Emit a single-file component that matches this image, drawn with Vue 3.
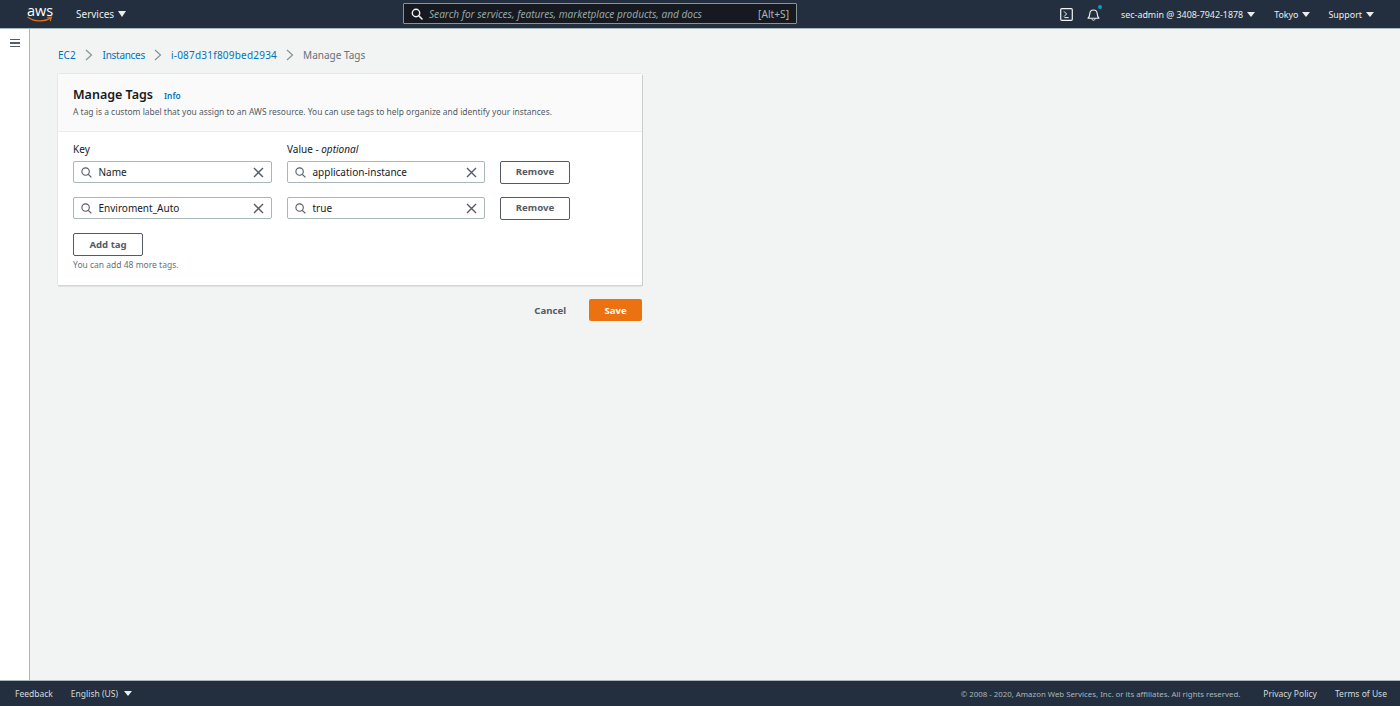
<script setup>
const rows = [
  { key: 'Name', value: 'application-instance' },
  { key: 'Enviroment_Auto', value: 'true' }
]
const crumbs = [
  { text: 'EC2', cls: '' },
  { text: 'Instances', cls: 'tight' },
  { text: 'i-087d31f809bed2934', cls: 'wide' }
]
</script>

<template>
  <div class="app">
    <header class="top">
      <div class="logo">
        <span class="logo-word">aws</span>
        <svg class="smile" width="26" height="7" viewBox="0 0 26 7">
          <path d="M1 1.2C7 5.6 17 6.2 23 2.4" fill="none" stroke="#ec7211" stroke-width="1.3" stroke-linecap="round"/>
          <path d="M20.6 1.2 24.4 1 23.4 4.6" fill="none" stroke="#ec7211" stroke-width="1.1" stroke-linecap="round"/>
        </svg>
      </div>
      <div class="nav-item services">Services<i class="caret big"></i></div>
      <div class="search">
        <svg class="search-ico" width="12" height="12" viewBox="0 0 12 12">
          <circle cx="5" cy="5" r="3.7" fill="none" stroke="#f2f3f3" stroke-width="1.4"/>
          <path d="M7.8 7.8 11 11" stroke="#f2f3f3" stroke-width="1.6" stroke-linecap="round"/>
        </svg>
        <span class="search-text">Search for services, features, marketplace products, and docs</span>
        <span class="search-key">[Alt+S]</span>
      </div>
      <div class="top-right">
        <svg class="term" width="13" height="13" viewBox="0 0 13 13">
          <rect x="0.7" y="0.7" width="11.6" height="11.6" rx="1" fill="none" stroke="#f2f3f3" stroke-width="1.2"/>
          <path d="M4 3.4 6.6 6 4 8.6M4.4 9.6H8.6" fill="none" stroke="#f2f3f3" stroke-width="1"/>
        </svg>
        <div class="bell">
          <svg width="13" height="13" viewBox="0 0 13 13">
            <path d="M1 10.2C2.6 9 2.7 7.6 2.8 5.6 3 3.4 4.4 2 6.5 2s3.5 1.4 3.7 3.6c.1 2 .2 3.4 1.8 4.6Z" fill="none" stroke="#f2f3f3" stroke-width="1.1" stroke-linejoin="round"/>
            <path d="M4.9 10.8c.2 1 .8 1.5 1.6 1.5s1.4-.5 1.6-1.5" fill="none" stroke="#f2f3f3" stroke-width="1"/>
          </svg>
          <span class="dot"></span>
        </div>
        <div class="nav-item small account">sec-admin @ 3408-7942-1878<i class="caret"></i></div>
        <div class="nav-item small region">Tokyo<i class="caret"></i></div>
        <div class="nav-item small support">Support<i class="caret"></i></div>
      </div>
    </header>

    <div class="middle">
      <aside class="side">
        <div class="burger"><span></span><span></span><span></span></div>
      </aside>
      <main class="content">
        <nav class="crumbs">
          <template v-for="c in crumbs" :key="c.text">
            <a class="link" :class="c.cls">{{ c.text }}</a>
            <svg class="chev" width="8" height="12" viewBox="0 0 8 12">
              <path d="M1 1 6.5 6 1 11" fill="none" stroke="#879596" stroke-width="1.2"/>
            </svg>
          </template>
          <span class="crumb-last">Manage Tags</span>
        </nav>

        <section class="card">
          <div class="card-head">
            <div class="title-row">
              <h1 class="title">Manage Tags</h1>
              <a class="info">Info</a>
            </div>
            <p class="desc">A tag is a custom label that you assign to an AWS resource. You can use tags to help organize and identify your instances.</p>
          </div>
          <div class="card-body">
            <div class="labels">
              <label class="lab">Key</label>
              <label class="lab">Value - <em>optional</em></label>
            </div>
            <div v-for="r in rows" :key="r.key" class="row">
              <div class="input key">
                <svg class="in-search" width="11" height="11" viewBox="0 0 11 11">
                  <circle cx="4.6" cy="4.6" r="3.7" fill="none" stroke="#545b64" stroke-width="1.1"/>
                  <path d="M7.3 7.3 10.4 10.4" stroke="#545b64" stroke-width="1.2"/>
                </svg>
                <span class="in-text">{{ r.key }}</span>
                <svg class="in-x" width="11" height="11" viewBox="0 0 11 11">
                  <path d="M1 1 10 10M10 1 1 10" stroke="#545b64" stroke-width="1.4"/>
                </svg>
              </div>
              <div class="input val">
                <svg class="in-search" width="11" height="11" viewBox="0 0 11 11">
                  <circle cx="4.6" cy="4.6" r="3.7" fill="none" stroke="#545b64" stroke-width="1.1"/>
                  <path d="M7.3 7.3 10.4 10.4" stroke="#545b64" stroke-width="1.2"/>
                </svg>
                <span class="in-text">{{ r.value }}</span>
                <svg class="in-x" width="11" height="11" viewBox="0 0 11 11">
                  <path d="M1 1 10 10M10 1 1 10" stroke="#545b64" stroke-width="1.4"/>
                </svg>
              </div>
              <button class="btn remove">Remove</button>
            </div>
            <button class="btn add">Add tag</button>
            <p class="hint">You can add 48 more tags.</p>
          </div>
        </section>

        <div class="actions">
          <button class="cancel">Cancel</button>
          <button class="save">Save</button>
        </div>
      </main>
    </div>

    <footer class="foot">
      <span class="f-link">Feedback</span>
      <span class="f-lang">English (US)<i class="caret"></i></span>
      <span class="f-copy">© 2008 - 2020, Amazon Web Services, Inc. or its affiliates. All rights reserved.</span>
      <span class="f-link pp">Privacy Policy</span>
      <span class="f-link tu">Terms of Use</span>
    </footer>
  </div>
</template>

<style>
html, body { margin: 0; padding: 0; }
</style>

<style scoped>
.app {
  width: 1400px;
  height: 706px;
  display: flex;
  flex-direction: column;
  overflow: hidden;
  font-family: "Noto Sans", "Open Sans", sans-serif;
  font-size: 10px;
  color: #16191f;
  background: #f2f3f3;
}
.top {
  height: 28px;
  flex: none;
  background: #232f3e;
  border-bottom: 1px solid #aab7b8;
  display: flex;
  align-items: center;
  color: #eaeded;
  position: relative;
}
.logo {
  width: 26px;
  margin-left: 27px;
  height: 22px;
  position: relative;
  flex: none;
}
.logo-word {
  position: absolute;
  left: 0;
  top: -1px;
  font-family: "Open Sans", sans-serif;
  font-size: 14.5px;
  line-height: 17px;
  color: #fff;
}
.smile { position: absolute; left: 0; top: 13px; }
.nav-item { display: flex; align-items: center; white-space: nowrap; }
.services { margin-left: 23px; font-size: 10px; }
.caret {
  display: inline-block;
  width: 0;
  height: 0;
  border-left: 4px solid transparent;
  border-right: 4px solid transparent;
  border-top: 5px solid #eaeded;
  margin-left: 4px;
}
.caret.big { border-left-width: 4.5px; border-right-width: 4.5px; border-top-width: 6px; margin-left: 4px; }
.search {
  position: absolute;
  left: 403px;
  top: 3px;
  width: 394px;
  height: 21px;
  box-sizing: border-box;
  border: 1px solid #879596;
  background: #16191f;
  display: flex;
  align-items: center;
  padding: 0 7px;
  border-radius: 1px;
}
.search-ico { flex: none; }
.search-text {
  margin-left: 6px;
  font-style: italic;
  color: #95a5a6;
  font-size: 10.1px;
  white-space: nowrap;
}
.search-key { margin-left: auto; color: #aab7b8; font-size: 10.2px; }
.top-right {
  margin-left: auto;
  display: flex;
  align-items: center;
}
.term { margin-right: 14px; }
.bell { position: relative; width: 13px; height: 13px; margin-right: 21px; }
.bell svg { display: block; }
.dot {
  position: absolute;
  top: -3px;
  right: -2px;
  width: 4px;
  height: 4px;
  border-radius: 50%;
  background: #00a1c9;
}
.small { font-size: 8.9px; }
.account { margin-right: 19px; }
.region { margin-right: 18px; }
.support { margin-right: 26px; }
.middle { flex: 1; display: flex; min-height: 0; }
.side {
  width: 29px;
  flex: none;
  background: #fff;
  border-right: 1px solid #aab7b8;
}
.burger {
  margin: 10px 0 0 10px;
  width: 10px;
  display: flex;
  flex-direction: column;
  gap: 2px;
}
.burger span { display: block; height: 1.4px; background: #545b64; }
.content { flex: 1; padding: 0 0 0 28px; }
.crumbs {
  height: 16px;
  margin-top: 18px;
  display: flex;
  align-items: center;
  white-space: nowrap;
  font-size: 10px;
}
.link { color: #0073bb; }
.tight { letter-spacing: -0.3px; margin-left: 1px; }
.wide { letter-spacing: 0.22px; }
.chev { margin: 0 9px; flex: none; }
.crumb-last { color: #687078; }
.card {
  width: 584px;
  margin-top: 11px;
  background: #fff;
  box-shadow: 0 1.5px 0 0 #d0d5d5, 1px 1px 0 0 #c8cdcd, -1px 0 0 0 #e6e8e8, 0 -1px 0 0 #e6e8e8;
}
.card-head {
  height: 58px;
  box-sizing: border-box;
  background: #fafafa;
  border-bottom: 1px solid #eaeded;
  padding: 12px 15px 0;
}
.title-row { display: flex; align-items: baseline; }
.title {
  margin: 0;
  font-size: 12.5px;
  line-height: 18px;
  font-weight: 600;
  color: #16191f;
}
.info { margin-left: 11px; color: #0073bb; font-size: 8.3px; font-weight: 600; }
.desc { margin: 2px 0 0; color: #545b64; font-size: 8.45px; line-height: 12px; white-space: nowrap; }
.card-body { padding: 11px 15px 0; height: 153px; box-sizing: border-box; }
.labels { display: flex; gap: 15px; height: 18px; }
.lab { width: 199px; font-size: 10px; line-height: 13px; color: #16191f; }
.lab em { font-style: italic; }
.row { display: flex; gap: 15px; margin-bottom: 14px; align-items: center; height: 22px; }
.input {
  box-sizing: border-box;
  height: 22px;
  border: 1px solid #aab7b8;
  border-radius: 2px;
  background: #fff;
  display: flex;
  align-items: center;
  padding: 0 7px;
  flex: none;
}
.key { width: 199px; }
.val { width: 198px; }
.in-text { margin-left: 6.5px; font-size: 10px; color: #16191f; white-space: nowrap; padding-bottom: 1px; }
.in-search, .in-x { flex: none; }
.in-x { margin-left: auto; }
.btn {
  box-sizing: border-box;
  height: 23px;
  padding: 0 0 1px;
  background: #fff;
  border: 1px solid #545b64;
  border-radius: 2px;
  color: #545b64;
  font-family: inherit;
  font-size: 9.6px;
  font-weight: 700;
}
.remove { width: 70px; }
.add { width: 70px; display: block; }
.hint { margin: 3px 0 0; font-size: 8.5px; line-height: 12px; color: #687078; }
.actions {
  width: 584px;
  margin-top: 14px;
  display: flex;
  justify-content: flex-end;
  align-items: center;
}
.cancel {
  background: none;
  border: 0;
  padding: 0;
  font-family: inherit;
  font-size: 9.6px;
  font-weight: 700;
  color: #545b64;
  margin-right: 23px;
}
.save {
  width: 53px;
  height: 22px;
  border: 0;
  border-radius: 2px;
  background: #ec7211;
  color: #fff;
  font-family: inherit;
  font-size: 9.6px;
  font-weight: 700;
  padding: 0;
}
.foot {
  height: 26px;
  flex: none;
  box-sizing: border-box;
  background: #232f3e;
  border-top: 1px solid #aab7b8;
  display: flex;
  align-items: center;
  font-size: 8.5px;
  color: #d5dbdb;
  white-space: nowrap;
  padding: 0 13px 0 15px;
}
.f-lang { margin-left: 18px; display: flex; align-items: center; }
.f-lang .caret { margin-left: 6px; }
.f-copy { margin-left: auto; font-size: 7.83px; color: #aab7b8; }
.pp { margin-left: 23px; }
.tu { margin-left: 18px; }
</style>
